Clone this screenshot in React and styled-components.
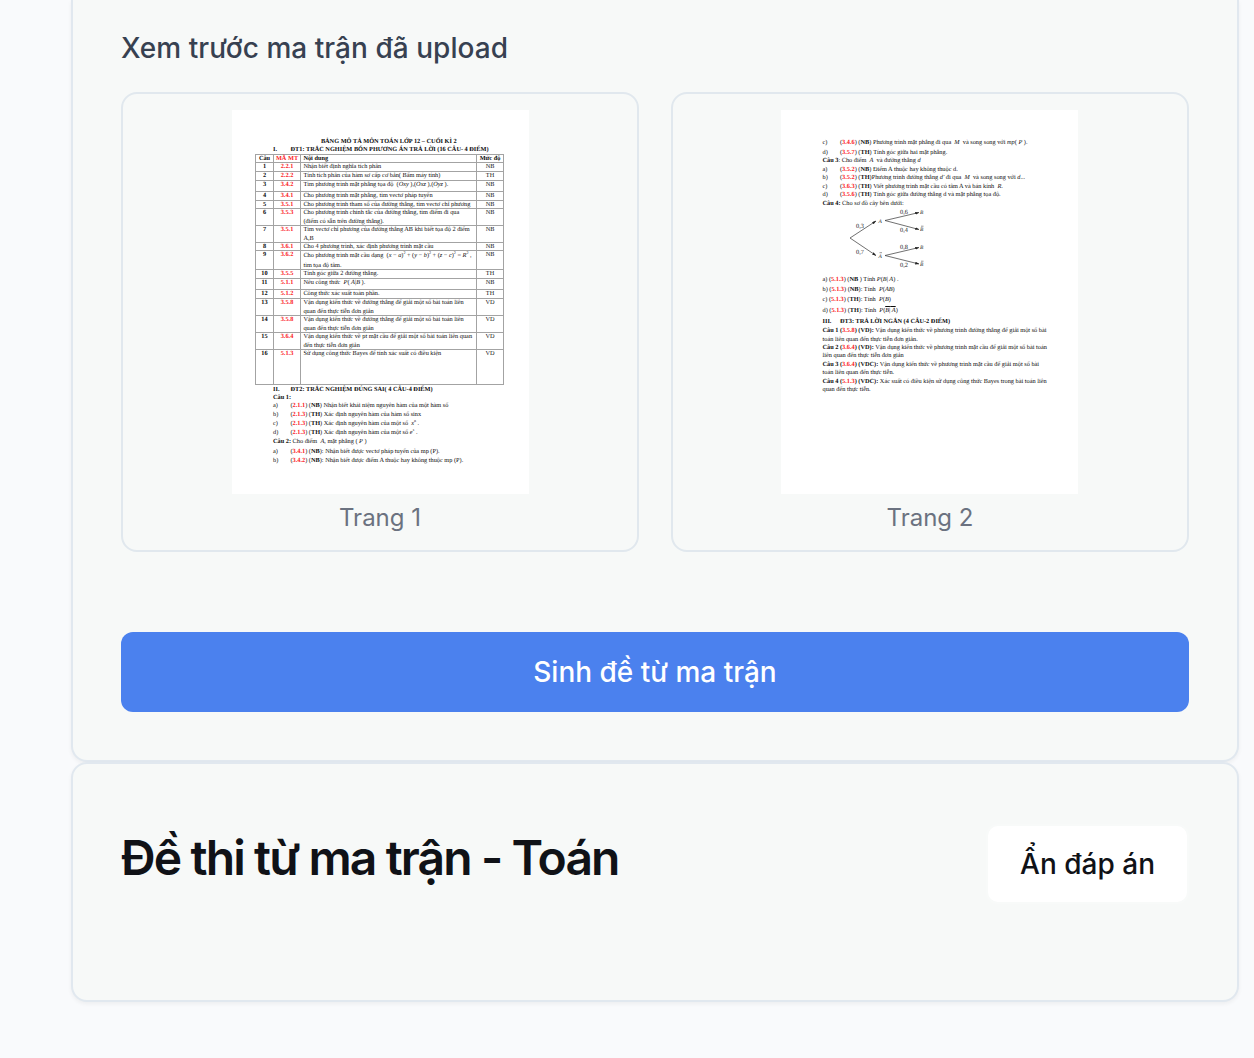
import React from "react";
import styled, { createGlobalStyle } from "styled-components";

const Global = createGlobalStyle`
  * { box-sizing: border-box; }
  body {
    margin: 0;
    background: #f9fafc;
    font-family: Inter, "Liberation Sans", sans-serif;
  }
`;

const Screen = styled.main`
  height: 1058px;
  overflow: hidden;
  padding: 0 15px 0 71px;
`;

const Card = styled.section`
  border: 2px solid #e1e8ef;
  border-radius: 16px;
  background: #f7f9f8;
  box-shadow: 0 2px 4px rgba(0, 0, 0, 0.05);
`;

const UploadCard = styled(Card)`
  height: 762px;
  padding: 28px 48px 48px;
  border-top: 0;
  border-top-left-radius: 0;
  border-top-right-radius: 0;
`;

const ExamCard = styled(Card)`
  height: 240px;
  padding: 60px 48px;
  display: flex;
  justify-content: space-between;
  align-items: flex-start;
`;

const Label = styled.h3`
  margin: 0 0 24px;
  font-size: 28px;
  font-weight: 500;
  line-height: 40px;
  letter-spacing: 0.04px;
  color: #374151;
`;

const Previews = styled.div`
  display: grid;
  grid-template-columns: 1fr 1fr;
  gap: 32px;
`;

const Preview = styled.figure`
  margin: 0;
  height: 460px;
  padding: 16px;
  border: 2px solid #e1e8ee;
  border-radius: 16px;
  display: flex;
  flex-direction: column;
  align-items: center;
`;

const Caption = styled.figcaption`
  margin-top: 8px;
  font-size: 24px;
  line-height: 32px;
  color: #6b7280;
`;

const Generate = styled.button`
  display: block;
  width: 100%;
  height: 80px;
  margin-top: 80px;
  border: 0;
  border-radius: 12px;
  background: #4b81ee;
  color: #fff;
  font: 500 28px/40px Inter, "Liberation Sans", sans-serif;
`;

const Title = styled.h2`
  margin: 6px 0 0;
  font-size: 48px;
  font-weight: 600;
  line-height: 56px;
  letter-spacing: -1.88px;
  color: #101217;
`;

const Toggle = styled.button`
  height: 80px;
  padding: 0 32px;
  border: 2px solid #f8faf9;
  border-radius: 12px;
  background: #fff;
  color: #101217;
  font: 500 28px/40px Inter, "Liberation Sans", sans-serif;
`;

const Sheet = styled.div`
  width: 297px;
  height: 384px;
  flex: none;
  margin-right: ${(p) => p.$shift || 0}px;
  padding: ${(p) => p.$pad};
  background: #fff;
  color: #0c0c0c;
  font-family: "Liberation Serif", "Times New Roman", serif;
  font-size: 6.31px;
  line-height: 8.3px;
  text-rendering: geometricPrecision;
  white-space: nowrap;
`;

const Line = styled.div`
  height: ${(p) => p.$h || 8.4}px;
  display: flex;
  align-items: center;
  justify-content: ${(p) => (p.$center ? "center" : "flex-start")};
  font-weight: ${(p) => (p.$bold ? 700 : 400)};
  white-space: pre;
`;

const Mark = styled.span`
  width: 17.5px;
  flex: none;
`;

const Red = styled.b`
  color: #fb2226;
`;

const Over = styled.span`
  text-decoration: overline;
  text-decoration-thickness: 0.5px;
`;

const Sup = styled.sup`
  font-size: 4px;
  line-height: 0;
`;

const Table = styled.div`
  width: 249px;
  margin: 0 0 0.8px -18px;
  border-left: 1px solid #a3a3a3;
  border-bottom: 1px solid #a3a3a3;
`;

const Row = styled.div`
  height: ${(p) => p.$h}px;
  display: grid;
  grid-template-columns: 18px 27px 176px 27px;
  border-top: 1px solid #a3a3a3;
`;

const Cell = styled.div`
  border-right: 1px solid #a3a3a3;
  text-align: ${(p) => (p.$left ? "left" : "center")};
  padding-top: 0.5px;
  padding-left: ${(p) => (p.$left ? 2.4 : 0)}px;
  font-weight: ${(p) => (p.$bold ? 700 : 400)};
  color: ${(p) => (p.$red ? "#fb2226" : "inherit")};
  line-height: ${(p) => p.$lh || 8.3}px;
  white-space: pre;
`;

const TreeBox = styled.div`
  height: 67.7px;
  padding-left: 25px;
`;

const rows = [
  [9, "1", "2.2.1", "Nhận biết định nghĩa tích phân", "NB"],
  [9, "2", "2.2.2", "Tính tích phân của hàm sơ cấp cơ bản( Bấm máy tính)", "TH"],
  [11, "3", "3.4.2", <>Tìm phương trình mặt phẳng tọa độ  (<i>Oxy</i> ),(<i>Oxz</i> ),(<i>Oyz</i> ).</>, "NB"],
  [9, "4", "3.4.1", "Cho phương trình mặt phẳng, tìm vectơ pháp tuyến", "NB"],
  [8, "5", "3.5.1", "Cho phương trình tham số của đường thẳng, tìm vectơ chỉ phương", "NB"],
  [17, "6", "3.5.3", "Cho phương trình chính tắc của đường thẳng, tìm điểm đi qua\n(điểm có sẵn trên đường thẳng).", "NB"],
  [17, "7", "3.5.1", "Tìm vectơ chỉ phương của đường thẳng AB khi biết tọa độ 2 điểm\nA,B", "NB"],
  [8, "8", "3.6.1", "Cho 4 phương trình, xác định phương trình mặt cầu", "NB"],
  [19, "9", "3.6.2", <>Cho phương trình mặt cầu dạng  (<i>x</i> − <i>a</i>)<Sup>2</Sup> + (<i>y</i> − <i>b</i>)<Sup>2</Sup> + (<i>z</i> − <i>c</i>)<Sup>2</Sup> = <i>R</i><Sup>2</Sup> ,{"\n"}tìm tọa độ tâm.</>, "NB", 9.6],
  [9, "10", "3.5.5", "Tính góc giữa 2 đường thẳng.", "TH"],
  [11, "11", "5.1.1", <>Nêu công thức  <i>P</i>( <i>A</i>|<i>B</i> ).</>, "NB"],
  [9, "12", "5.1.2", "Công thức xác suất toàn phần.", "TH"],
  [17, "13", "3.5.8", "Vận dụng kiến thức về đường thẳng để giải một số bài toán liên\nquan đến thực tiễn đơn giản", "VD"],
  [17, "14", "3.5.8", "Vận dụng kiến thức về đường thẳng để giải một số bài toán liên\nquan đến thực tiễn đơn giản", "VD"],
  [17, "15", "3.6.4", "Vận dụng kiến thức về pt mặt cầu để giải một số bài toán liên quan\nđến thực tiễn đơn giản", "VD"],
  [35, "16", "5.1.3", "Sử dụng công thức Bayes để tính xác suất có điều kiện", "VD"],
];

const Item = ({ mark, code, level, h, children }) => (
  <Line $h={h}>
    <Mark>{mark}</Mark>
    <span>
      (<Red>{code}</Red>) (<b>{level}</b>{children}
    </span>
  </Line>
);

const Tree = () => (
  <svg width="80" height="62" viewBox="0 0 80 62" fill="none" stroke="#333" strokeWidth="0.7">
    <defs>
      <marker id="tip" viewBox="0 0 6 4" refX="5.5" refY="2" markerWidth="6" markerHeight="4" orient="auto">
        <path d="M0 0 6 2 0 4Z" fill="#222" stroke="none" />
      </marker>
    </defs>
    <path d="M2 30 28 13" markerEnd="url(#tip)" />
    <path d="M2 30 28 47.5" markerEnd="url(#tip)" />
    <path d="M37 12.5 71 4.5" markerEnd="url(#tip)" />
    <path d="M37 12.5 71 21.5" markerEnd="url(#tip)" />
    <path d="M37 47.5 71 39.5" markerEnd="url(#tip)" />
    <path d="M37 47.5 71 56" markerEnd="url(#tip)" />
    <g fill="#222" stroke="none" fontSize="6.3" fontFamily="Liberation Serif, serif">
      <text x="8" y="19.5">0,3</text>
      <text x="8" y="46">0,7</text>
      <text x="52" y="6.2">0,6</text>
      <text x="52" y="24.2">0,4</text>
      <text x="52" y="40.7">0,8</text>
      <text x="52" y="59">0,2</text>
      <g fontStyle="italic" fontSize="5.4">
        <text x="30.5" y="14.5">A</text>
        <text x="30.5" y="49.5">A</text>
        <text x="72" y="6">B</text>
        <text x="72" y="23">B</text>
        <text x="72" y="41">B</text>
        <text x="72" y="58">B</text>
      </g>
    </g>
    <path d="M31.5 44.7H34M73 18.2H75.5M73 53.2H75.5" strokeWidth="0.5" />
  </svg>
);

const PageOne = () => (
  <Sheet $pad="27.9px 24px 0 41.5px">
    <Line $bold $center $h={8.4}>BẢNG MÔ TẢ MÔN TOÁN LỚP 12 – CUỐI KÌ 2</Line>
    <Line $bold $h={7.7}><Mark>I.</Mark>ĐT1: TRẮC NGHIỆM BỐN PHƯƠNG ÁN TRẢ LỜI (16 CÂU- 4 ĐIỂM)</Line>
    <Table>
      <Row $h={8}>
        <Cell $bold>Câu</Cell>
        <Cell $bold $red>MÃ MT</Cell>
        <Cell $bold $left>Nội dung</Cell>
        <Cell $bold>Mức độ</Cell>
      </Row>
      {rows.map(([h, n, code, text, level, lh]) => (
        <Row key={n} $h={h}>
          <Cell $bold>{n}</Cell>
          <Cell $bold $red>{code}</Cell>
          <Cell $left $lh={lh}>{text}</Cell>
          <Cell>{level}</Cell>
        </Row>
      ))}
    </Table>
    <Line $bold $h={8}><Mark>II.</Mark>ĐT2: TRẮC NGHIỆM ĐÚNG SAI( 4 CÂU-4 ĐIỂM)</Line>
    <Line $bold $h={8.4}>Câu 1:</Line>
    <Item mark="a)" code="2.1.1" level="NB" h={8.5}>) Nhận biết khái niệm nguyên hàm của một hàm số</Item>
    <Item mark="b)" code="2.1.3" level="TH" h={8.7}>) Xác định nguyên hàm của hàm số sinx</Item>
    <Item mark="c)" code="2.1.3" level="TH" h={9.4}>) Xác định nguyên hàm của một số  <i>x</i><Sup>n</Sup> .</Item>
    <Item mark="d)" code="2.1.3" level="TH" h={9.4}>) Xác định nguyên hàm của một số <i>e</i><Sup>x</Sup> .</Item>
    <Line $h={9}><span><b>Câu 2:</b> Cho điểm  <i>A</i>, mặt phẳng ( <i>P</i> )</span></Line>
    <Item mark="a)" code="3.4.1" level="NB" h={9.6}>): Nhận biết được vectơ pháp tuyến của mp (P).</Item>
    <Item mark="b)" code="3.4.2" level="NB" h={8.4}>): Nhận biết được điểm A thuộc hay không thuộc mp (P).</Item>
  </Sheet>
);

const PageTwo = () => (
  <Sheet $pad="27.2px 20px 0 41.5px" $shift={1}>
    <Item mark="c)" code="3.4.6" level="NB" h={11}>) Phương trình mặt phẳng đi qua  <i>M</i>  và song song với <i>mp</i>( <i>P</i> ).</Item>
    <Item mark="d)" code="3.5.7" level="TH" h={9.2}>) Tính góc giữa hai mặt phẳng.</Item>
    <Line $h={8}><span><b>Câu 3</b>: Cho điểm  <i>A</i>  và đường thẳng <i>d</i></span></Line>
    <Item mark="a)" code="3.5.2" level="NB" h={8.6}>) Điểm A thuộc hay không thuộc d.</Item>
    <Item mark="b)" code="3.5.2" level="TH" h={8.6}>)Phương trình đường thẳng <i>d'</i> đi qua  <i>M</i>  và song song với <i>d</i>...</Item>
    <Item mark="c)" code="3.6.3" level="TH" h={8.5}>) Viết phương trình mặt cầu có tâm A và bán kính  <i>R</i>.</Item>
    <Item mark="d)" code="3.5.6" level="TH" h={8.5}>) Tính góc giữa đường thẳng d và mặt phẳng tọa độ.</Item>
    <Line $h={8.3}><span><b>Câu 4:</b> Cho sơ đồ cây bên dưới:</span></Line>
    <TreeBox><Tree /></TreeBox>
    <Line $h={10}><span>a) (<Red>5.1.3</Red>) (<b>NB</b> ) Tính <i>P</i>(<i>B</i>|<i> A</i>) .</span></Line>
    <Line $h={10}><span>b) (<Red>5.1.3</Red>) (<b>NB</b>): Tính  <i>P</i>(<i>AB</i>)</span></Line>
    <Line $h={10}><span>c) (<Red>5.1.3</Red>) (<b>TH</b>): Tính  <i>P</i>(<i>B</i>)</span></Line>
    <Line $h={12}><span>d) (<Red>5.1.3</Red>) (<b>TH</b>): Tính  <i>P</i>(<Over><i>B</i>|<i> A</i></Over>)</span></Line>
    <Line $bold $h={9.6}><Mark>III.</Mark>ĐT3: TRẢ LỜI NGẮN (4 CÂU-2 ĐIỂM)</Line>
    <Line><span><b>Câu 1 (<Red>3.5.8</Red>) (VD):</b> Vận dụng kiến thức về phương trình đường thẳng để giải một số bài</span></Line>
    <Line><span>toán liên quan đến thực tiễn đơn giản.</span></Line>
    <Line><span><b>Câu 2 (<Red>3.6.4</Red>) (VD):</b> Vận dụng kiến thức về phương trình mặt cầu để giải một số bài toán</span></Line>
    <Line><span>liên quan đến thực tiễn đơn giản</span></Line>
    <Line><span><b>Câu 3 (<Red>3.6.4</Red>) (VDC):</b> Vận dụng kiến thức về phương trình mặt cầu để giải một số bài</span></Line>
    <Line><span>toán liên quan đến thực tiễn.</span></Line>
    <Line><span><b>Câu 4 (<Red>5.1.3</Red>) (VDC):</b> Xác suất có điều kiện sử dụng công thức Bayes trong bài toán liên</span></Line>
    <Line><span>quan đến thực tiễn.</span></Line>
  </Sheet>
);

export default function App() {
  return (
    <>
      <Global />
      <Screen>
        <UploadCard>
          <Label>Xem trước ma trận đã upload</Label>
          <Previews>
            <Preview>
              <PageOne />
              <Caption>Trang 1</Caption>
            </Preview>
            <Preview>
              <PageTwo />
              <Caption>Trang 2</Caption>
            </Preview>
          </Previews>
          <Generate>Sinh đề từ ma trận</Generate>
        </UploadCard>
        <ExamCard>
          <Title>Đề thi từ ma trận - Toán</Title>
          <Toggle>Ẩn đáp án</Toggle>
        </ExamCard>
      </Screen>
    </>
  );
}
